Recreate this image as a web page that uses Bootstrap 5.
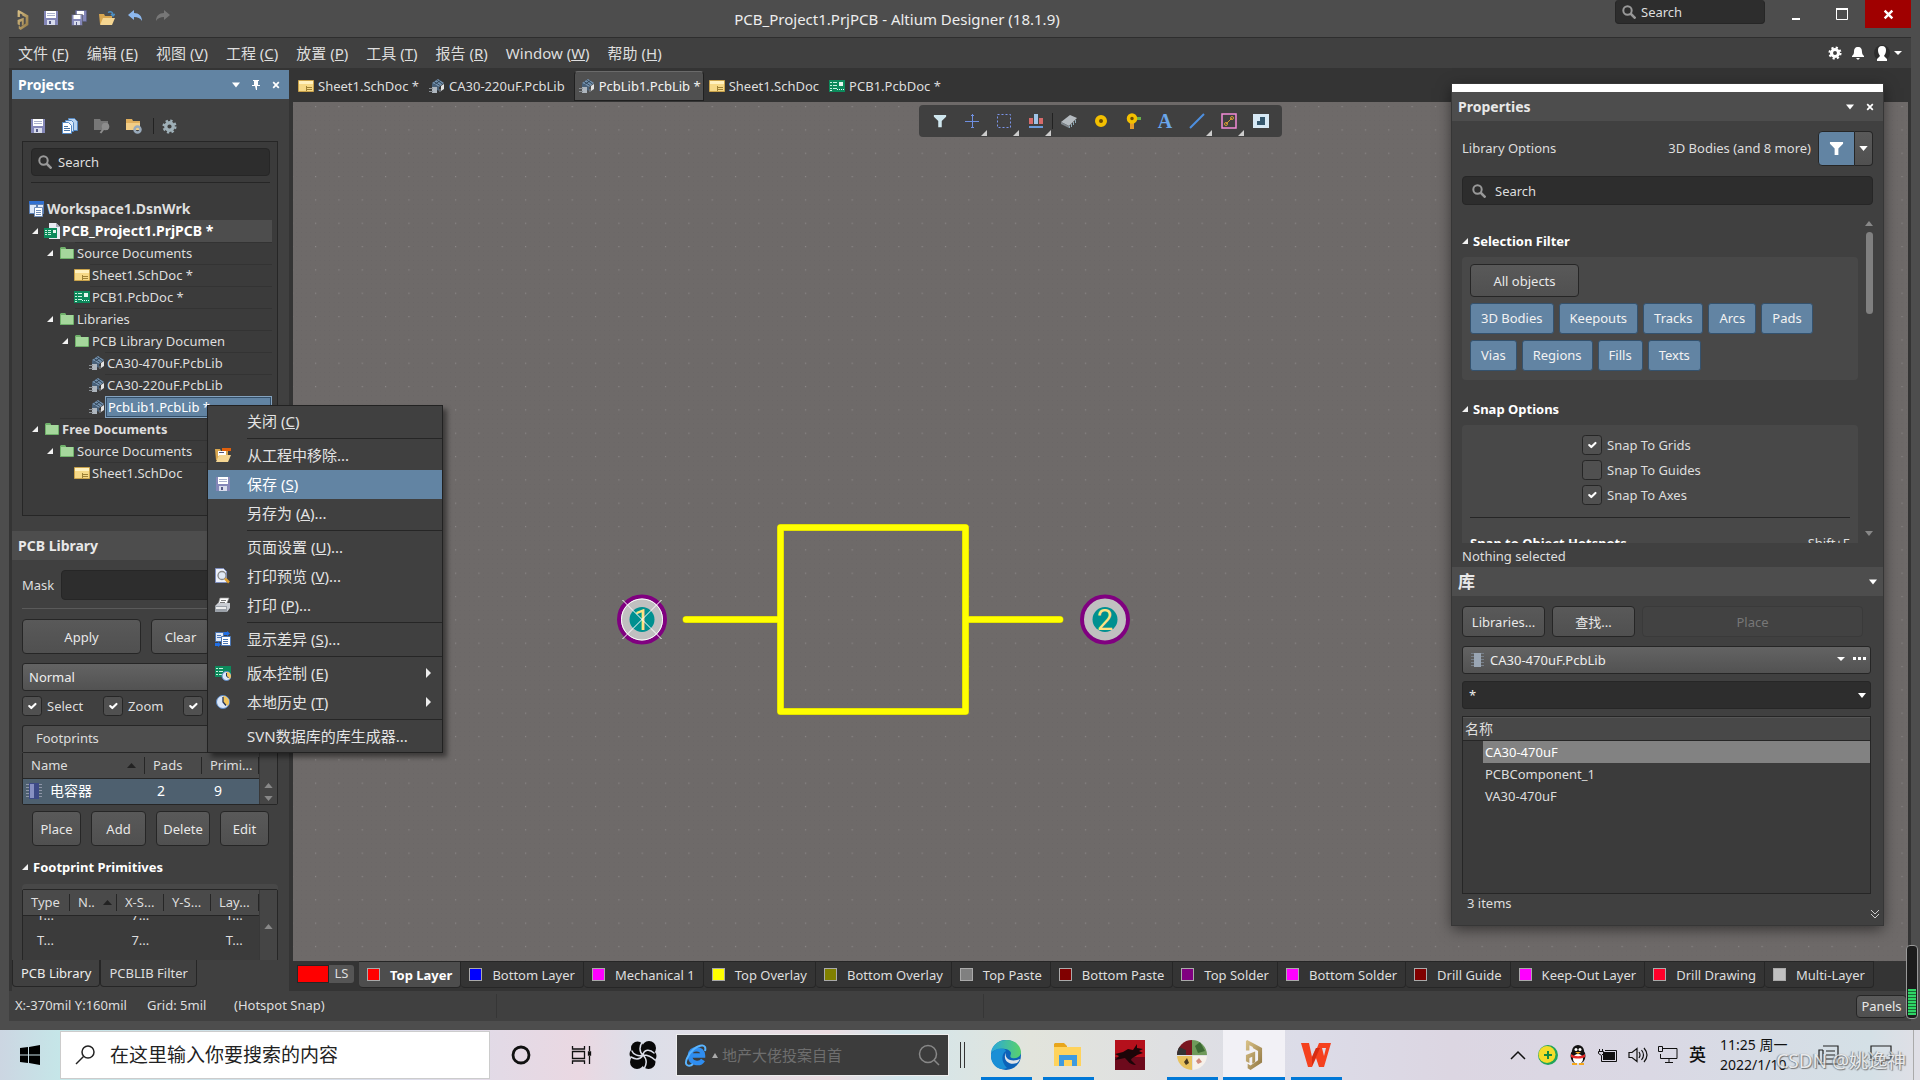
<!DOCTYPE html>
<html lang="zh-CN">
<head>
<meta charset="utf-8">
<meta name="viewport" content="width=device-width, initial-scale=1">
<title>PCB_Project1.PrjPCB - Altium Designer (18.1.9)</title>
<link href="https://cdn.jsdelivr.net/npm/bootstrap@5.3.0/dist/css/bootstrap.min.css" rel="stylesheet">
<style>
:root{--frame:#4d4d4d;--face:#404040;--deep:#343434;--edge:#262626;--blue:#6284a3;--ink:#dedede}
body{font-family:"Noto Sans","Noto Sans CJK SC",sans-serif;font-size:13px;line-height:20px;color:var(--ink);background:var(--frame);overflow:hidden}
button,input,select{font-family:inherit}
svg{flex:none;display:block}
a{color:inherit;text-decoration:none}
.shrinkable{min-width:0;min-height:0}
.i16{width:16px;height:16px}
.title-bar{height:37px}
.title-text{font-size:15px;color:#eee;line-height:38px;padding-left:8px}
.quick{gap:12px;padding:10px 0 0 15px}
.bare{background:none;border:0;padding:0;color:inherit}
.field{background:#2d2d2d;border:1px solid var(--edge);border-radius:4px;color:var(--ink);font-size:13px;line-height:20px;padding:0 8px}
.field:focus{background:#2d2d2d;color:#fff;box-shadow:none}
.field::placeholder{color:var(--ink);opacity:1}
.seek{position:relative}
.seek svg{position:absolute;left:7px;top:50%;margin-top:-7px;width:14px;height:14px}
.seek .field{width:100%;padding-left:26px}
.top-seek{width:150px;height:24px;margin-right:8px}
.top-seek .field{height:24px;border-top:0;padding-left:25px}
.win-btn{width:46px;height:28px}
.win-close{background:#a00000;margin-right:9px}
.workspace{margin:0 9px;background:var(--deep)}
.menu-bar{height:31px;border-top:1px solid #2e2e2e;background:var(--face);font-size:15px;gap:18px;padding:0 9px}
.menu-bar a{line-height:30px;white-space:pre}
.menu-icons{gap:9px}
.left-dock{width:277px;margin:2px 4px 0 3px;background:var(--face)}
.dock-head{height:29px;background:var(--frame);font-size:14px;font-weight:700;padding:0 9px 0 6px;color:#e8e8e8;flex:none;gap:12px}
.dock-head.on{background:var(--blue);color:#fff}
.proj-tools{height:42px;padding:12px 18px 0;gap:16px}
.tool-sep{border-left:1px solid #222;height:16px}
.tree-box{margin:0 11px 15px 10px;border:1px solid var(--edge);padding:6px 5px 31px 6px;background:#3b3b3b}
.tree-box .seek{margin:0 2px}
.tree-box .field{height:28px}
.tree-rule{border-top:1px solid var(--edge);margin:6px 2px 15px}
.tree{list-style:none;margin:0;padding:0}
.tree li{height:22px;display:flex;align-items:center}
.tree .tw{width:12px;flex:none}
.tree .lab{flex:1;min-width:0;height:22px;line-height:21px;border-top:1px solid #333;padding:0 46px 0 2px;white-space:nowrap}
.tree .lab span{display:block;overflow:hidden}
.tree .top{font-size:14px}
.tree .top span{overflow:visible}
.l1{padding-left:3px}.l2{padding-left:18px}.l3{padding-left:45px}.l3f{padding-left:33px}.l4{padding-left:60px}
.tree .hot{background:#4d4d4d;color:#fff}
.tree .sel{background:var(--blue);border:1px solid #85a3bf;outline:1px solid #34506a;outline-offset:-2px;color:#fff;line-height:20px}
.lib-pane{padding:10px 11px 0 10px;overflow:hidden}
.lib-pane>*{flex-shrink:0}
.lib-pane .mask{height:30px}
.rule{border-top:1px solid #5a5a5a;margin:8px 0 10px}
.key{background:linear-gradient(#595959,#505050);border:1px solid var(--edge);border-radius:4px;color:#e8e8e8;font-size:13px;line-height:20px;padding:0 6px}
.h35{height:35px}
.drop,.drop:focus{background:linear-gradient(#636363,#525252);border:1px solid var(--edge);border-radius:3px;color:#eee;font-size:13px;line-height:20px;height:28px;padding:0 6px;box-shadow:none}
.drop.dark{background:#2d2d2d}
.tick{width:20px;height:20px;margin:0;border:1px solid var(--edge);border-radius:4px;background-color:#505050;background-size:14px;float:none;flex:none}
.tick:checked{background-color:#505050;border-color:var(--edge)}
.tick:focus{box-shadow:none;border-color:var(--edge)}
.tick-lab{display:flex;align-items:center;gap:5px}
.foot-tab{height:27px;background:var(--frame);border:1px solid var(--edge);border-bottom:0;padding:2px 13px;margin-top:9px;border-radius:3px 3px 0 0}
.grid-box{border:1px solid var(--edge);background:#3b3b3b;display:flex;border-radius:2px}
.grid-box table{width:236px;table-layout:fixed;flex:none}
.grid-box th{height:25px;background:#4a4a4a;border-bottom:1px solid var(--edge);font-weight:400;padding:0 8px;white-space:nowrap;overflow:hidden}
.grid-box th>div{display:flex;justify-content:space-between;align-items:center;height:17px;margin-right:-8px;border-right:1px solid var(--edge)}
.grid-box td{padding:0 12px;height:26px;white-space:nowrap}
.sb{flex:1;background:#454545;border-left:1px solid #383838;display:flex;flex-direction:column;align-items:center;padding-top:26px}
.picked td{background:#4e606f;color:#fff;font-size:14px}
.ops{padding:6px 9px 0 10px;gap:10px}
.sec{font-weight:700;color:#fff;display:flex;align-items:center;gap:5px}
.prim-wrap{background:#484848;padding-top:5px;border-radius:4px 4px 0 0;overflow:hidden;flex:1 1 0;min-height:0}
.prim-wrap .rows{height:60px;overflow:hidden}
.prim-wrap .rows table{margin-top:-13px}
.prim-wrap td{height:25px;padding:0 14px}
.dock-tabs{height:31px;flex:none}
.dock-tabs a{height:27px;border:1px solid var(--edge);border-top:0;border-radius:0 0 4px 4px;padding:3px 8px 0;color:var(--ink)}
.dock-tabs a.on{background:var(--face);color:#eee}
.doc-tabs{height:34px;padding:3px 0 1px}
.doc-tabs a{height:30px;padding:0 4px;display:flex;align-items:center;gap:4px;white-space:nowrap;border:1px solid transparent}
.doc-tabs a.on{background:#505050;border-color:#6a6a6a #202020 #202020;border-radius:4px 4px 0 0;color:#f4f4f4;padding:0 2px 0 4px;margin-left:4px}
.board{background:#6e6a69;margin-right:3px;position:relative;overflow:hidden}
.board>svg{position:absolute;inset:0;width:100%;height:100%}
.bar-float{position:absolute;top:3px;left:626px;height:32px;width:363px;background:var(--face);border-radius:4px;padding:0 5px;display:flex;align-items:center}
.bar-float button{width:32px;height:32px;display:flex;align-items:center;justify-content:center;position:relative}
.bar-float .more::after{content:"";position:absolute;right:1px;bottom:1px;border-left:6px solid transparent;border-bottom:6px solid #ccc}
.glyph-a{font:700 20px "Liberation Serif",serif;color:#6aa6ea}
.layers{height:30px;padding-left:4px}
.layers a{height:27px;border:1px solid var(--edge);border-left-width:0;border-radius:0 0 4px 4px;padding:0 8px;display:flex;align-items:center;gap:10px;white-space:nowrap}
.layers a.on{background:var(--frame);font-weight:700;color:#fff}
.sw{width:13px;height:13px;border:1px solid #aaa;flex:none}
.ls{margin:4px 5px 0 0;height:18px;width:57px;line-height:17px}
.ls i{width:32px;background:red;border:1px solid var(--edge)}
.ls b{flex:1;font-weight:400;background:#555;border-radius:0 3px 3px 0;text-align:center}
.status{height:30px;background:var(--face);margin:0 9px;padding-left:6px}
.status .cell{border-right:1px solid #363636;height:24px;line-height:22px}
.panels-btn{height:23px;width:51px;margin-right:4px;padding:0}
.bottom-edge{height:9px}
.task{height:50px;color:#111;background:linear-gradient(90deg,#ccd6e2 0,#c5e6e8 60px,#dcdcea 420px,#ead8e2 580px,#dcdfe9 640px,#ecdde2 830px,#d2e6ec 900px,#e2e4dc 1030px,#dcdce8 1300px,#dcd6e2 1450px,#dad8e4 1650px,#d4e0e6 1870px,#e0dfe6 100%)}
.start{width:60px}
.win-seek{width:430px;height:48px;margin-top:1px;position:relative}
.win-seek input{width:100%;height:48px;border:1px solid #ccc;background:#fff;border-radius:0;font-size:19px;padding:0 0 0 49px;color:#222}
.win-seek input::placeholder{color:#222;opacity:1}
.win-seek svg{position:absolute;left:14px;top:13px}
.c61{width:61px}.c62{width:62px}.c30{width:30px}
.cellb{display:flex;align-items:center;justify-content:center;height:50px;position:relative}
.run::after{content:"";position:absolute;left:6px;right:5px;bottom:0;height:3px;background:#0078d7}
.live{background:#f2f1f6}
.live::after{left:0;right:0}
.ie{width:273px;height:42px;background:#3c3c3c;border:1px solid #eee;margin:4px 0 0 3px;position:relative;display:flex;align-items:center;padding:0 8px 0 7px;gap:4px}
.ie input{background:none;border:0;font-size:15px;color:#6e6e6e;width:170px;padding:0}
.ie input::placeholder{color:#6e6e6e;opacity:1}
.lang{width:29px;font-size:17px;font-weight:500}
.clock{width:83px;font-size:14px;line-height:20px;padding:5px 0 0 8px;white-space:nowrap}
.desk-end{width:16px;border-right:1px solid #aaa;margin-right:6px}
.wmark{position:absolute;right:14px;bottom:4px;font-size:19px;line-height:30px;color:#eee;opacity:.75;text-shadow:1px 1px 1px #555,-1px 0 1px #777;white-space:nowrap}
.ctx{--bs-dropdown-padding-y:1px;--bs-dropdown-padding-x:0;--bs-dropdown-bg:#404040;--bs-dropdown-border-color:#222;--bs-dropdown-border-radius:0;--bs-dropdown-font-size:15px;width:236px;position:absolute;left:207px;top:405px;box-shadow:4px 4px 5px rgba(0,0,0,.45)}
.ctx .dropdown-item{height:29px;padding:0 10px 2px 7px;color:#e4e4e4;display:flex;align-items:center;line-height:26px;white-space:pre}
.ctx .dropdown-item .ic{width:32px;flex:none}
.ctx .dropdown-item.hot{background:var(--blue);color:#fff}
.ctx hr{margin:2px 0 2px 39px;border-top:1px solid var(--edge);opacity:1}
.props{position:absolute;right:37px;top:84px;width:431px;background:var(--face);border-top:8px solid #fff;box-shadow:0 4px 14px rgba(0,0,0,.55);display:flex;flex-direction:column;outline:1px solid #363636}
.props .inner{padding:0 10px}
.opt-row{padding-top:10px}
.opt-row>span{margin-top:-2px}
.split-l{width:37px;height:35px;background:var(--blue);color:#fff}
.split-r{width:18px;height:35px;padding:0;border-left:0}
.pseek{margin:10px 0}
.pseek svg{left:10px}
.pseek .field{height:29px;padding-left:32px}
.pview{height:328px;overflow:hidden;position:relative;padding-right:15px}
.pbox{background:#484848;border-radius:4px}
.objs{padding:7px 8px 11px;height:123px}
.chip{background:var(--blue);border:1px solid #34526e;border-radius:3px;color:#f2f2f2;font-size:13px;line-height:20px;height:31px;padding:0 10px 2px;white-space:nowrap}
.chips{gap:5px;margin-top:6px}
.snaps{gap:5px;padding-left:112px}
.snap-rule{border-top:1px solid var(--edge);margin:12px 0 15px}
.pscroll{position:absolute;right:0;top:6px;bottom:7px;width:8px}
.pthumb{width:7px;height:82px;background:#808080;border-radius:4px;margin-top:6px}
.lib-keys{gap:7px;height:31px;padding-right:10px}
.ghost,.ghost:disabled{background:#424242;border-color:#3a3a3a;color:#777}
.lib-pick{margin:9px 2px 7px 0}
.lib-pick .drop{padding-left:27px}
.lib-list{border:1px solid var(--edge);background:#3b3b3b;height:178px;margin-right:2px}
.lib-list .hd{height:24px;background:#484848;border-bottom:1px solid var(--edge);border-top:1px solid #555;font-size:14px;line-height:21px;padding-left:2px}
.lib-list li{height:22px;line-height:22px;margin-left:20px;padding-left:2px}
.lib-list li.on{background:#828282;color:#fff}
.lib-foot{height:31px;padding:0 0 7px 5px;margin-right:-6px}
.meter{position:absolute;right:2px;top:945px;width:12px;height:74px;border:1px solid #999;border-radius:4px;background:#1c1c1c;padding:43px 1px 3px}
.meter div{height:100%;background:repeating-linear-gradient(#2fd566 0 2px,#1a6a35 2px 3px)}
</style>
<script src="https://cdn.jsdelivr.net/npm/bootstrap@5.3.0/dist/js/bootstrap.bundle.min.js"></script>
</head>
<body class="vh-100 d-flex flex-column position-relative">
<svg width="0" height="0" class="position-absolute" aria-hidden="true">
<defs>
<linearGradient id="gold" x1="0" x2="1" y2="1"><stop stop-color="#dcc48a"/><stop offset="1" stop-color="#8e7440"/></linearGradient>
<symbol id="altium" viewBox="0 0 16 26"><path fill="url(#gold)" d="M2 0l5 2.500v3.500l-3-1.500V9H1V1zM7 2.500L15 7v12.500L5 26l-2.500-1.500v-4L5 22l6.500-4.500V9.500L7 7zM1 13l8-3v9l-2.500 1.500v-6L4 15.500V20l-3-1.500z"/></symbol>
<symbol id="save" viewBox="0 0 16 16"><path fill="#8487b8" d="M1 1h14v14H1z"/><path fill="#fff" d="M3 1h10v7H3z"/><path fill="#d8dcec" d="M4 10h8v5H4z"/><path fill="#555a88" d="M6 11h2v3H6z"/><path stroke="#a9b0cc" d="M4 3.500h8M4 5.500h8"/></symbol>
<symbol id="saveall" viewBox="0 0 16 16"><path fill="#8487b8" stroke="#555a80" stroke-width=".5" d="M4.500.5h11v11h-11z"/><path fill="#fff" d="M6 1h7v4H6z"/><path fill="#8487b8" stroke="#4d4d4d" stroke-width=".5" d="M.5 4.500h11v11H.5z"/><path fill="#fff" d="M2.500 5h7v4h-7z"/><path fill="#d8dcec" d="M3 11h6v4H3z"/><path fill="#555a88" d="M5 12h1v3H5z"/></symbol>
<symbol id="open" viewBox="0 0 16 16"><path fill="#d9a750" d="M0 4h5l1 2h7v8H1z"/><path fill="#f5d692" d="M4 8h12l-3 7H1z"/><path fill="none" stroke="#4b8fc4" stroke-width="1.500" d="M9 2.500c3-2 5 0 5 2.500M12 4l2 2 2-2"/></symbol>
<symbol id="folder" viewBox="0 0 16 16"><path fill="#6fb16a" d="M1 3l1-1h4l1 1v2H1z"/><path fill="#a5d79c" d="M1 4h13v9.500H1z"/><path fill="none" stroke="#6fb16a" d="M1.500 4v9.500h13V4"/></symbol>
<symbol id="sheet" viewBox="0 0 16 16"><path fill="#f6d987" stroke="#c9a24a" d="M.5 2.500h15v11H.5z"/><path fill="#fff1bf" d="M1 3h14v3H1z"/><path fill="#8a6c22" d="M9 9h5v1H9zM9 11h5v1H9zM8 8h1v5H8z" opacity=".8"/></symbol>
<symbol id="pcb" viewBox="0 0 16 16"><path fill="#0d8a5c" d="M0 2h16v12H0z"/><path stroke="#c9f4e0" d="M1 4.500h2M4 4.500h4M1 7.500h2M4 7.500h4M1 10.500h2M4 10.500h4M1 12.500h2"/><path fill="#e5f6ee" d="M10 4h4v4h-4z"/><path stroke="#dff" stroke-dasharray="1 1" d="M8 11.500h7"/></symbol>
<symbol id="prj" viewBox="0 0 16 16"><path fill="#e8eaf2" d="M5 0h7l4 4v12H5z"/><path fill="#aab" d="M12 0l4 4h-4z"/><path fill="#0d8a5c" d="M0 5h13v10H0z"/><path stroke="#c9f4e0" d="M1 7.500h2M4 7.500h3M1 9.500h2M4 9.500h3M1 11.500h2M4 11.500h3"/><path fill="#e5f6ee" d="M9 7h3v3H9z"/></symbol>
<symbol id="lib" viewBox="0 0 16 16"><path fill="#7593b0" d="M3 5l6-4 6 4-5 4z"/><path stroke="#26384a" d="M5 3.500l6 4M7.500 2l6 4M5.500 6.500l6-4" stroke-width=".8"/><path fill="#48617a" d="M3 5v4l7 4V9z"/><path fill="#e3e3e3" d="M12 8l3-2v5l-3 2z"/><path fill="#aeb6be" d="M3 9h5v6H3z"/><path stroke="#8a9096" d="M0 10.500h4M0 13.500h4M11 11v3"/></symbol>
<symbol id="wrk" viewBox="0 0 16 16"><path fill="#2f6fd0" d="M0 0h15v3H0z"/><path fill="#dce7f7" stroke="#5b7fb5" d="M.5 3.500h8v9h-8zM7.500 3.500h7v9h-7z"/><path fill="#fff" stroke="#6f8db8" d="M5.500 6.500h8v9h-8z"/><path stroke="#6f8db8" d="M7 9.500h5M7 11.500h5M7 13.500h5"/></symbol>
<symbol id="docs" viewBox="0 0 16 16"><path fill="#b9d3ef" stroke="#5388c4" d="M6.500.5h6l3 3v9h-9z"/><path fill="#dceafa" stroke="#5388c4" d="M3.500 2.500h6l2 2v9h-8z"/><path fill="#fff" stroke="#5388c4" d="M.5 4.500h6l3 3v8h-9z"/><path stroke="#4a76a8" d="M2 8.500h4M2 10.500h6M2 12.500h6"/></symbol>
<symbol id="fsearch" viewBox="0 0 16 16"><path fill="#777" d="M0 1h6l1 2h7v9H0z"/><circle cx="11.500" cy="8.500" r="3.800" fill="#8d8d8d"/><path stroke="#8d8d8d" stroke-width="2" d="M9.500 11l-3 4"/></symbol>
<symbol id="fgear" viewBox="0 0 16 16"><path fill="#e0ae5c" d="M0 1h6l1 2h7v9H0z"/><path fill="#f3cd86" d="M0 5h14v7H0z"/><circle cx="11.500" cy="11.500" r="3" fill="none" stroke="#9ab" stroke-width="2.500"/></symbol>
<symbol id="gear" viewBox="0 0 16 16"><circle cx="8" cy="8" r="4" fill="none" stroke="currentColor" stroke-width="3.500"/><circle cx="8" cy="8" r="6.300" fill="none" stroke="currentColor" stroke-width="2.400" stroke-dasharray="2.500 2.450"/></symbol>
<symbol id="mag" viewBox="0 0 14 14"><circle cx="5.500" cy="5.500" r="4.200" fill="none" stroke="#999" stroke-width="2"/><path stroke="#999" stroke-width="2.500" d="M8.500 8.500l5 5"/></symbol>
<symbol id="twist" viewBox="0 0 6 6"><path fill="#f2f2f2" d="M6 0v6H0z"/></symbol>
<symbol id="down" viewBox="0 0 10 6"><path fill="#fff" d="M0 0h10L5 6z"/></symbol>
<symbol id="up" viewBox="0 0 10 6"><path fill="#888" d="M0 6h10L5 0z"/></symbol>
<symbol id="dn" viewBox="0 0 10 6"><path fill="#888" d="M0 0h10L5 6z"/></symbol>
<symbol id="cross" viewBox="0 0 10 10"><path stroke="#fff" stroke-width="2.200" d="M1.500 1.500l7 7M8.500 1.500l-7 7"/></symbol>
<symbol id="chipi" viewBox="0 0 16 16"><path stroke="#8f96a8" stroke-dasharray="1 2" stroke-width="3" d="M1.500 1v14M14.500 1v14"/><path fill="#3d4a86" d="M3 0h10v16H3z"/><path fill="#8790c2" d="M4 1h4v14H4z"/></symbol>
<symbol id="funnel" viewBox="0 0 16 16"><path fill="currentColor" d="M1 1h14v2L10 8v7H6V8L1 3z"/></symbol>
</defs>
</svg>

<header class="title-bar d-flex">
  <div class="quick d-flex align-items-start">
    <svg width="16" height="20"><use href="#altium"/></svg>
    <button class="bare" aria-label="保存"><svg class="i16"><use href="#save"/></svg></button>
    <button class="bare" aria-label="全部保存"><svg class="i16"><use href="#saveall"/></svg></button>
    <button class="bare" aria-label="打开"><svg class="i16"><use href="#open"/></svg></button>
    <button class="bare" aria-label="撤销"><svg class="i16" viewBox="0 0 16 16"><path fill="#8db8ee" d="M1 5l6-5v3c5 0 8 3 8 8-2-3-4-4-8-4v3z"/></svg></button>
    <button class="bare" aria-label="重做"><svg class="i16" viewBox="0 0 16 16"><path fill="#777" d="M15 5L9 0v3c-5 0-8 3-8 8 2-3 4-4 8-4v3z"/></svg></button>
  </div>
  <div class="title-text flex-grow-1 text-center">PCB_Project1.PrjPCB - Altium Designer (18.1.9)</div>
  <div class="top-seek seek"><svg><use href="#mag"/></svg><input class="field" aria-label="Search" placeholder="Search"></div>
  <button class="bare win-btn d-flex justify-content-center align-items-center" aria-label="Minimize"><svg width="10" height="14"><path fill="#fff" d="M1 11h8v2H1z"/></svg></button>
  <button class="bare win-btn d-flex justify-content-center align-items-center" aria-label="Maximize"><svg width="12" height="12"><path fill="none" stroke="#fff" d="M.5 1.500h11v10H.5z"/><path fill="#fff" d="M0 0h12v2H0z"/></svg></button>
  <button class="bare win-btn win-close d-flex justify-content-center align-items-center" aria-label="Close"><svg width="11" height="11"><use href="#cross"/></svg></button>
</header>

<main class="workspace flex-grow-1 d-flex flex-column shrinkable">
  <nav class="menu-bar d-flex align-items-center">
    <a href="#">文件 (<u>F</u>)</a><a href="#">编辑 (<u>E</u>)</a><a href="#">视图 (<u>V</u>)</a><a href="#">工程 (<u>C</u>)</a><a href="#">放置 (<u>P</u>)</a><a href="#">工具 (<u>T</u>)</a><a href="#">报告 (<u>R</u>)</a><a href="#">Window (<u>W</u>)</a><a href="#">帮助 (<u>H</u>)</a>
    <span class="menu-icons ms-auto d-flex align-items-center text-white">
      <svg width="14" height="14"><use href="#gear"/></svg>
      <svg width="14" height="14" viewBox="0 0 14 14"><path fill="#fff" d="M7 1c3 0 4 2 4 5 0 2 1 3 2 4v1H1v-1c1-1 2-2 2-4 0-3 1-5 4-5zM5 12h4l-2 2z"/></svg>
      <svg width="28" height="16" viewBox="0 0 28 16"><circle cx="8" cy="8" r="8" fill="#2d2d2d"/><path fill="#fff" d="M8 1c3 0 4 2 4 4 0 3-1 4-2 6l3 3v2H3v-2l3-3C5 9 4 8 4 5c0-2 1-4 4-4zM20 6h8l-4 4z"/></svg>
    </span>
  </nav>
  <div class="flex-grow-1 d-flex shrinkable">
    <aside class="left-dock d-flex flex-column">
      <div class="dock-head on d-flex align-items-center"><span class="flex-grow-1">Projects</span>
        <svg width="8" height="6"><use href="#down"/></svg>
        <svg width="8" height="10" viewBox="0 0 8 10"><path fill="#fff" d="M1 0h6v1H6v4h2v1H0V5h2V1H1zM3 6h2v4H4z"/></svg>
        <svg width="8" height="8"><use href="#cross"/></svg></div>
      <div class="proj-tools d-flex align-items-center">
        <button class="bare" aria-label="保存"><svg class="i16"><use href="#save"/></svg></button>
        <button class="bare" aria-label="文档"><svg class="i16"><use href="#docs"/></svg></button>
        <button class="bare" aria-label="浏览"><svg class="i16"><use href="#fsearch"/></svg></button>
        <button class="bare" aria-label="工程选项"><svg class="i16"><use href="#fgear"/></svg></button>
        <div class="d-flex align-items-center gap-2" style="margin-left:-5px"><div class="tool-sep"></div>
        <button class="bare" aria-label="设置" style="color:#9fb0b8"><svg width="15" height="15"><use href="#gear"/></svg></button></div>
      </div>
      <section class="tree-box">
        <div class="seek"><svg><use href="#mag"/></svg><input class="field" aria-label="Search" placeholder="Search"></div>
        <div class="tree-rule"></div>
        <ul class="tree">
          <li class="fw-bold"><svg class="i16"><use href="#wrk"/></svg><div class="lab top border-0"><span>Workspace1.DsnWrk</span></div></li>
          <li class="l1 fw-bold"><span class="tw"><svg width="6" height="6"><use href="#twist"/></svg></span><svg class="i16"><use href="#prj"/></svg><div class="lab top hot border-0"><span>PCB_Project1.PrjPCB *</span></div></li>
          <li class="l2"><span class="tw"><svg width="6" height="6"><use href="#twist"/></svg></span><svg class="i16"><use href="#folder"/></svg><div class="lab"><span>Source Documents</span></div></li>
          <li class="l3"><svg class="i16"><use href="#sheet"/></svg><div class="lab"><span>Sheet1.SchDoc *</span></div></li>
          <li class="l3"><svg class="i16"><use href="#pcb"/></svg><div class="lab"><span>PCB1.PcbDoc *</span></div></li>
          <li class="l2"><span class="tw"><svg width="6" height="6"><use href="#twist"/></svg></span><svg class="i16"><use href="#folder"/></svg><div class="lab"><span>Libraries</span></div></li>
          <li class="l3f"><span class="tw"><svg width="6" height="6"><use href="#twist"/></svg></span><svg class="i16"><use href="#folder"/></svg><div class="lab"><span>PCB Library Documen</span></div></li>
          <li class="l4"><svg class="i16"><use href="#lib"/></svg><div class="lab"><span>CA30-470uF.PcbLib</span></div></li>
          <li class="l4"><svg class="i16"><use href="#lib"/></svg><div class="lab"><span>CA30-220uF.PcbLib</span></div></li>
          <li class="l4"><svg class="i16"><use href="#lib"/></svg><div class="lab sel"><span>PcbLib1.PcbLib *</span></div></li>
          <li class="l1 fw-bold"><span class="tw"><svg width="6" height="6"><use href="#twist"/></svg></span><svg class="i16"><use href="#folder"/></svg><div class="lab"><span>Free Documents</span></div></li>
          <li class="l2"><span class="tw"><svg width="6" height="6"><use href="#twist"/></svg></span><svg class="i16"><use href="#folder"/></svg><div class="lab"><span>Source Documents</span></div></li>
          <li class="l3"><svg class="i16"><use href="#sheet"/></svg><div class="lab"><span>Sheet1.SchDoc</span></div></li>
        </ul>
      </section>
      <div class="dock-head d-flex align-items-center">PCB Library</div>
      <section class="lib-pane flex-grow-1 d-flex flex-column shrinkable">
        <div class="mask d-flex align-items-center"><label for="mask" style="width:39px">Mask</label><input id="mask" class="field flex-grow-1 h-100 shrinkable"></div>
        <div class="rule"></div>
        <div class="d-flex h35" style="gap:10px"><button class="key" style="width:119px">Apply</button><button class="key" style="width:59px">Clear</button><button class="key flex-fill" aria-label="Magnify"></button></div>
        <select class="form-select drop" style="margin-top:9px" aria-label="Mode"><option>Normal</option></select>
        <div class="d-flex" style="margin-top:5px;gap:20px">
          <label class="tick-lab"><input type="checkbox" class="form-check-input tick" checked>Select</label>
          <label class="tick-lab"><input type="checkbox" class="form-check-input tick" checked>Zoom</label>
          <input type="checkbox" class="form-check-input tick" aria-label="Clear existing" checked>
        </div>
        <div class="foot-tab">Footprints</div>
        <div class="grid-box">
          <table><colgroup><col style="width:122px"><col style="width:57px"><col style="width:57px"></colgroup>
            <thead><tr><th><div>Name<svg width="9" height="5" class="me-2"><path d="M0 5h9L4.500 0z" fill="#222"/></svg></div></th><th><div>Pads</div></th><th><div>Primi...</div></th></tr></thead>
            <tbody><tr class="picked"><td style="padding-left:3px"><div class="d-flex align-items-center" style="gap:8px"><svg class="i16"><use href="#chipi"/></svg>电容器</div></td><td>2</td><td>9</td></tr></tbody>
          </table>
          <div class="sb"><svg width="9" height="5" class="mt-1 mb-2"><use href="#up"/></svg><svg width="9" height="5"><use href="#dn"/></svg></div>
        </div>
        <div class="ops d-flex"><button class="key h35" style="width:49px">Place</button><button class="key h35" style="width:55px">Add</button><button class="key h35" style="width:54px">Delete</button><button class="key h35" style="width:49px">Edit</button></div>
        <div class="sec" style="margin:11px 0 7px"><svg width="6" height="6"><use href="#twist"/></svg>Footprint Primitives</div>
        <div class="prim-wrap">
          <div class="grid-box">
            <div>
              <table><colgroup><col style="width:47px"><col style="width:47px"><col style="width:47px"><col style="width:47px"><col style="width:48px"></colgroup>
                <thead><tr><th><div>Type</div></th><th><div>N..<svg width="9" height="5" class="me-1"><path d="M0 5h9L4.500 0z" fill="#222"/></svg></div></th><th><div>X-S...</div></th><th><div>Y-S...</div></th><th><div>Lay...</div></th></tr></thead>
              </table>
              <div class="rows"><table><tbody>
                <tr><td>T...</td><td></td><td>7...</td><td></td><td>T...</td></tr>
                <tr><td>T...</td><td></td><td>7...</td><td></td><td>T...</td></tr>
                <tr><td>P...</td><td>1</td><td>4...</td><td>4...</td><td>M...</td></tr></tbody></table></div>
            </div>
            <div class="sb"><svg width="9" height="5" class="mt-2"><use href="#up"/></svg></div>
          </div>
        </div>
      </section>
      <nav class="dock-tabs d-flex"><a class="on" href="#">PCB Library</a><a href="#">PCBLIB Filter</a></nav>
    </aside>

    <section class="flex-grow-1 d-flex flex-column shrinkable">
      <nav class="doc-tabs d-flex">
        <a href="#"><svg class="i16"><use href="#sheet"/></svg>Sheet1.SchDoc *</a>
        <a href="#"><svg class="i16"><use href="#lib"/></svg>CA30-220uF.PcbLib</a>
        <a href="#" class="on"><svg class="i16"><use href="#lib"/></svg>PcbLib1.PcbLib *</a>
        <a href="#"><svg class="i16"><use href="#sheet"/></svg>Sheet1.SchDoc</a>
        <a href="#"><svg class="i16"><use href="#pcb"/></svg>PCB1.PcbDoc *</a>
      </nav>
      <div class="board flex-grow-1">
        <svg>
          <defs>
            <pattern id="fine" width="4.666" height="4.666" patternUnits="userSpaceOnUse" x="22" y="4"><path fill="#6a6666" d="M0 0h1v1H0z"/></pattern>
            <pattern id="dots" width="23.330" height="23.330" patternUnits="userSpaceOnUse" x="22" y="4"><path fill="#8c8888" d="M0 0h1.200v1.200H0z"/></pattern>
          </defs>
          <rect width="100%" height="100%" fill="url(#fine)"/><rect width="100%" height="100%" fill="url(#dots)"/>
          <path fill="none" stroke="#c8c800" stroke-width="7" stroke-linecap="round" stroke-linejoin="round" d="M487.500 425.500H672.500V609.500H487.500zM393 517.500H487.500M672.500 517.500H767"/>
          <path fill="none" stroke="#ff0" stroke-width="6" stroke-linecap="round" stroke-linejoin="round" d="M487.500 425.500H672.500V609.500H487.500zM393 517.500H487.500M672.500 517.500H767"/>
          <g stroke="#800080" stroke-width="4" fill="#c0c0c0"><circle cx="349" cy="517.500" r="23"/><circle cx="812" cy="517.500" r="23"/></g>
          <g fill="#009090"><circle cx="349" cy="517.500" r="12.500"/><circle cx="812" cy="517.500" r="12.500"/></g>
          <g fill="#ffe282" font-family="Roboto, sans-serif" font-size="29" text-anchor="middle"><text x="349" y="528">1</text><text x="812" y="528">2</text></g>
          <g fill="none" stroke="#fff"><circle cx="349" cy="517.500" r="20.500"/><path d="M329.500 498l39 39M368.500 498l-39 39"/></g>
        </svg>
        <div class="bar-float">
          <button class="bare" aria-label="Filter" style="color:#cfe6ee"><svg width="14" height="14"><use href="#funnel"/></svg></button>
          <button class="bare more" aria-label="Origin"><svg class="i16" viewBox="0 0 16 16"><path stroke="#6f8fe0" fill="none" d="M8.500 1v14M1 8.500h14M7 2.500h3M7 14.500h3"/></svg></button>
          <button class="bare more" aria-label="Select area"><svg class="i16" viewBox="0 0 16 16"><path stroke="#7b95ea" fill="none" stroke-dasharray="2 2" d="M1.500 1.500h13v13h-13z"/></svg></button>
          <button class="bare more" aria-label="Align"><svg class="i16" viewBox="0 0 16 16"><path fill="#d66a6a" d="M1 5h4v6H1zM11 5h4v6h-4z"/><path fill="#9fc4e8" d="M6 1h4v10H6z"/><path fill="#6b9bdc" d="M1 13h14v2H1z"/></svg></button>
          <div class="tool-sep"></div>
          <button class="bare" aria-label="Body"><svg class="i16" viewBox="0 0 16 16"><path fill="#b5bbc0" d="M0 9l9-7 7 3-8 8z"/><path fill="#7f868c" d="M0 9l8 4v2l-8-4z"/><path stroke="#8fa8b4" d="M8.500 13v2M10.500 11v3M12.500 9v3M14.500 7v3"/></svg></button>
          <button class="bare" aria-label="Pad"><svg class="i16" viewBox="0 0 16 16"><circle cx="8" cy="8" r="4" fill="#6d4c00" stroke="#f4c000" stroke-width="4"/></svg></button>
          <button class="bare" aria-label="Via"><svg class="i16" viewBox="0 0 16 16"><path fill="#69b34a" d="M10 4h6v3h-6z"/><path fill="#e59a28" d="M5 9h4v7H5z"/><circle cx="7" cy="5.500" r="3.500" fill="#6d4c00" stroke="#f4c000" stroke-width="3.500"/></svg></button>
          <button class="bare glyph-a" aria-label="String">A</button>
          <button class="bare more" aria-label="Line"><svg class="i16" viewBox="0 0 16 16"><path stroke="#4d8fe0" stroke-width="2" d="M1 15L15 1"/></svg></button>
          <button class="bare more" aria-label="Track"><svg class="i16" viewBox="0 0 16 16"><path stroke="#f28bd6" fill="none" stroke-width="1.500" d="M1 1h14v14H1z"/><path stroke="#d49a34" d="M5 11l6-6"/><circle cx="5" cy="11" r="1.500" fill="none" stroke="#d49a34"/><circle cx="11" cy="5" r="1.500" fill="none" stroke="#d49a34"/></svg></button>
          <button class="bare" aria-label="Region"><svg class="i16" viewBox="0 0 16 16"><path fill="#d7e9f5" d="M0 1h16v14H0z"/><path fill="#35586e" d="M7 4h5v8H4V8h3z"/></svg></button>
        </div>
      </div>
      <nav class="layers d-flex">
        <div class="ls d-flex"><i></i><b>LS</b></div>
        <a class="on" href="#"><span class="sw" style="background:#f00"></span>Top Layer</a>
        <a href="#"><span class="sw" style="background:#00f"></span>Bottom Layer</a>
        <a href="#"><span class="sw" style="background:#f0f"></span>Mechanical 1</a>
        <a href="#"><span class="sw" style="background:#ff0"></span>Top Overlay</a>
        <a href="#"><span class="sw" style="background:#808000"></span>Bottom Overlay</a>
        <a href="#"><span class="sw" style="background:#808080"></span>Top Paste</a>
        <a href="#"><span class="sw" style="background:#800000"></span>Bottom Paste</a>
        <a href="#"><span class="sw" style="background:#800080"></span>Top Solder</a>
        <a href="#"><span class="sw" style="background:#f0f"></span>Bottom Solder</a>
        <a href="#"><span class="sw" style="background:#800000"></span>Drill Guide</a>
        <a href="#"><span class="sw" style="background:#f0f"></span>Keep-Out Layer</a>
        <a href="#"><span class="sw" style="background:#ff002a"></span>Drill Drawing</a>
        <a href="#"><span class="sw" style="background:#c0c0c0"></span>Multi-Layer</a>
      </nav>
    </section>
  </div>
</main>
<div class="status d-flex align-items-center">
  <div class="cell d-flex" style="width:482px"><span style="width:132px">X:-370mil Y:160mil</span><span style="width:87px">Grid: 5mil</span><span>(Hotspot Snap)</span></div>
  <div class="cell" style="width:487px"></div>
  <button class="key panels-btn ms-auto">Panels</button>
</div>
<div class="bottom-edge"></div>

<footer class="task d-flex position-relative">
  <button class="bare start cellb" aria-label="开始"><svg width="20" height="20" viewBox="0 0 20 20"><path d="M0 3l8-1v7.500H0zM9 2l11-2v9.500H9zM0 10.500h8V18l-8-1zM9 10.500h11V20L9 18z"/></svg></button>
  <div class="win-seek"><svg width="22" height="22" viewBox="0 0 22 22"><circle cx="14" cy="8" r="6" fill="none" stroke="#222" stroke-width="1.500"/><path stroke="#222" stroke-width="1.500" d="M9.500 12.500L2 20"/></svg><input aria-label="搜索" placeholder="在这里输入你要搜索的内容"></div>
  <button class="bare cellb c61" aria-label="Cortana"><svg width="20" height="20"><circle cx="10" cy="10" r="8" fill="none" stroke="#111" stroke-width="2.800"/></svg></button>
  <button class="bare cellb c61" aria-label="任务视图"><svg width="22" height="20" viewBox="0 0 22 20" fill="none" stroke="#111" stroke-width="1.300"><path d="M1.500 1v3h12V1M1.500 19v-3h12v3M1.500 6.500h12v7h-12zM18.500 1v5M18.500 11v8"/><path fill="#111" d="M17.500 7h2v3h-2z"/></svg></button>
  <button class="bare cellb c61" aria-label="浏览器"><svg width="28" height="28" viewBox="0 0 28 28"><g fill="#080808"><circle cx="8.500" cy="7" r="6.500"/><circle cx="20" cy="7" r="7"/><circle cx="6.500" cy="13" r="6"/><circle cx="21.500" cy="15" r="6"/><circle cx="8" cy="21" r="7"/><circle cx="19.500" cy="21" r="7"/><path d="M8 5h12v19H8z"/></g><g fill="none" stroke="#dcdfe9" stroke-width="1.500" stroke-linecap="round"><path d="M14 14C10 11 10 5 14 0M14 14c1-6 7-6 11-2M14 14c5 0 8 1 12 5M14 14c4 4 4 9 1 14M14 14c-3 5-7 5-12 2M14 14C9 16 4 13 3 10"/></g></svg></button>
  <div class="ie"><svg width="24" height="24" viewBox="0 0 24 24"><path fill="none" stroke="#2f8df0" stroke-width="4.500" d="M19 17c-3 5-13 4-13-4.500S19 4 19 12.500H7"/><path fill="none" stroke="#59b4ff" stroke-width="2" d="M21 8c2-7-5-7-11-2S0 20 3 22s6-1 6-1"/></svg><svg width="6" height="5"><path fill="#aaa" d="M0 5h6L3 0z"/></svg><input aria-label="IE 搜索" placeholder="地产大佬投案自首"><svg class="ms-auto" width="22" height="22"><circle cx="10" cy="10" r="8.500" fill="none" stroke="#888" stroke-width="1.500"/><path stroke="#888" stroke-width="1.500" d="M16 16l5 5"/></svg></div>
  <div class="cellb" style="width:26px"><svg width="5" height="26"><path stroke="#333" d="M.5 0v26M4.500 0v26"/></svg></div>
  <button class="bare cellb c62 run" aria-label="Edge"><svg width="30" height="30" viewBox="0 0 30 30"><defs><linearGradient id="eg" x2="1"><stop stop-color="#2aa7dc"/><stop offset="1" stop-color="#5ad26a"/></linearGradient></defs><circle cx="15" cy="15" r="15" fill="#0c62b8"/><path fill="url(#eg)" d="M0 13C2-4 29-4 30 12c0 5-5 7-9 6-3-1-1-3-1-5C19 8 6 7 0 13z"/><path fill="#1a8fd6" d="M0 14c4-6 13-7 15-3-4 2-6 10 1 17C7 32-1 24 0 14z"/><path fill="#dfe3e8" d="M15 12c-2 5 3 10 11 8l3-1c-1 2-2 3-3 4-8 3-15-3-11-11z"/></svg></button>
  <button class="bare cellb c62 run" aria-label="资源管理器"><svg width="28" height="26" viewBox="0 0 28 26"><path fill="#e8a61c" d="M0 2l1-1h9l3 3v5H0z"/><path fill="#ffd35c" d="M0 5h27v19H0z"/><path fill="#3e9be0" d="M5 13h18v11h-5v-6h-8v6H5z"/></svg></button>
  <button class="bare cellb c62" aria-label="龙"><svg width="30" height="30" viewBox="0 0 30 30"><path fill="#b5101c" d="M0 0h30v30H0z"/><path fill="#6d0a1c" d="M0 17h30v13H0z"/><path fill="#1c0508" d="M0 14l8-2 5-3 5 1 4-6v4l6 1-4 2 4 2-6 2c-2 2-5 2-6 5l5 5c-6 0-8-4-11-7l-5 1-5 1 4-4z"/></svg></button>
  <button class="bare cellb c62 run" aria-label="相册"><svg width="30" height="30" viewBox="0 0 30 30"><clipPath id="rc"><circle cx="15" cy="15" r="15"/></clipPath><g clip-path="url(#rc)"><path fill="#7a1620" d="M0 0h15v15H0z"/><path fill="#333" d="M0 6l9 4v5H0z"/><path fill="#6f9a5a" d="M15 0h15v15H15z"/><path fill="#3d6a34" d="M18 6l5-4 5 9-7 2z"/><path fill="#e8c25e" d="M0 16h15v14H0z"/><path fill="#4a3a20" d="M7 22l3-4 2 5-3 2z"/><path fill="#f6f1ea" d="M16 16h14v14H16z"/><path fill="#d08a7a" d="M19 21l3-3 3 4-4 2z"/></g></svg></button>
  <button class="bare cellb c62 run live" aria-label="Altium"><svg width="22" height="30"><use href="#altium"/></svg></button>
  <button class="bare cellb c62 run" aria-label="WPS"><svg width="30" height="26" viewBox="0 0 30 26"><path fill="#f5411e" d="M0 1h8l3 14 4-9h6l2 8 2-8h-9l2-5h12l-7 24h-5l-3-9-4 9H7z"/><path fill="#c3200c" d="M11 15l4-9h4l-8 18z" opacity=".6"/></svg></button>
  <div class="ms-auto d-flex">
    <div class="cellb c30"><svg width="16" height="10"><path fill="none" stroke="#111" stroke-width="1.500" d="M1 9l7-7 7 7"/></svg></div>
    <div class="cellb c30"><svg width="20" height="20"><circle cx="10" cy="10" r="10" fill="#22a45a"/><circle cx="9" cy="9.500" r="8.500" fill="#f3dd2a"/><path stroke="#128a44" stroke-width="2" d="M10 6v8M6 10h8"/></svg></div>
    <div class="cellb c30"><svg width="18" height="20" viewBox="0 0 18 20"><ellipse cx="9" cy="11" rx="7.500" ry="8" fill="#111"/><circle cx="9" cy="6" r="6" fill="#111"/><ellipse cx="9" cy="14" rx="5" ry="5" fill="#fff"/><path fill="#e52b2b" d="M2 9c4 3 10 3 14 0v3c-4 2-10 2-14 0z"/><circle cx="7" cy="4.500" r="1.500" fill="#fff"/><circle cx="11" cy="4.500" r="1.500" fill="#fff"/><path fill="#f6a81c" d="M6 7h6l-3 2zM3 18h5v2H3zM10 18h5v2h-5z"/></svg></div>
    <div class="cellb c30"><svg width="20" height="14"><path fill="#111" d="M5 4h12v8H5z"/><path fill="none" stroke="#111" d="M7 2.500h11.500v11h-15V8M.5 3.500h5v2l-2 2-3-2zM1.500 1v3M4.500 1v3"/></svg></div>
    <div class="cellb c30"><svg width="20" height="16" fill="none" stroke="#111" stroke-width="1.200"><path d="M1 5.500h3l5-4v13l-5-4H1zM11 5q2 3 0 6M13.500 3q4 5 0 10M16 1q6 7 0 14"/></svg></div>
    <div class="cellb c30"><svg width="20" height="18" fill="none" stroke="#111"><path d="M5 2.500h14v10H2.500V8M11 13v3M7 16.500h8M.5.5h4v5h-4z"/></svg></div>
    <div class="cellb lang">英</div>
    <div class="clock">11:25 周一<br>2022/1/10</div>
    <div class="cellb" style="width:68px"><svg width="22" height="20" fill="none" stroke="#222" stroke-width="1.200"><path d="M5 1h15v18H1V5h4M5 5v12M8 6h9M8 10h9M8 14h9"/></svg></div>
    <div class="cellb" style="width:35px"><svg width="22" height="20" fill="none" stroke="#222" stroke-width="1.200"><path d="M1 1h20v14h-7l-3 4-3-4H1z"/></svg></div>
    <div class="desk-end"></div>
  </div>
  <div class="wmark">CSDN @姚逸神</div>
</footer>

<aside class="props">
  <div class="dock-head d-flex align-items-center"><span class="flex-grow-1">Properties</span><svg width="8" height="6"><use href="#down"/></svg><svg width="8" height="8"><use href="#cross"/></svg></div>
  <div class="inner">
    <div class="opt-row d-flex align-items-center">
      <span class="flex-grow-1">Library Options</span><span style="margin-right:7px">3D Bodies (and 8 more)</span>
      <button class="key split-l d-flex align-items-center justify-content-center rounded-end-0" aria-label="Filter"><svg width="15" height="15"><use href="#funnel"/></svg></button>
      <button class="key split-r d-flex align-items-center justify-content-center rounded-start-0" aria-label="Filter list"><svg width="9" height="5"><use href="#down"/></svg></button>
    </div>
    <div class="seek pseek"><svg><use href="#mag"/></svg><input class="field" aria-label="Search" placeholder="Search"></div>
    <div class="pview">
      <div class="sec" style="padding:16px 0 6px"><svg width="6" height="6"><use href="#twist"/></svg>Selection Filter</div>
      <div class="pbox objs">
        <button class="key" style="width:109px;height:33px">All objects</button>
        <div class="d-flex chips"><button class="chip">3D Bodies</button><button class="chip">Keepouts</button><button class="chip">Tracks</button><button class="chip">Arcs</button><button class="chip">Pads</button></div>
        <div class="d-flex chips"><button class="chip">Vias</button><button class="chip">Regions</button><button class="chip">Fills</button><button class="chip">Texts</button></div>
      </div>
      <div class="sec" style="padding:19px 0 6px"><svg width="6" height="6"><use href="#twist"/></svg>Snap Options</div>
      <div class="pbox" style="padding:10px 8px">
        <div class="snaps d-flex flex-column">
          <label class="tick-lab"><input type="checkbox" class="form-check-input tick" checked>Snap To Grids</label>
          <label class="tick-lab"><input type="checkbox" class="form-check-input tick">Snap To Guides</label>
          <label class="tick-lab"><input type="checkbox" class="form-check-input tick" checked>Snap To Axes</label>
        </div>
        <div class="snap-rule"></div>
        <div class="d-flex justify-content-between"><b class="text-white">Snap to Object Hotspots</b><span>Shift+E</span></div>
      </div>
      <div class="pscroll d-flex flex-column align-items-center"><svg width="8" height="5"><use href="#up"/></svg><div class="pthumb"></div><svg width="8" height="5" class="mt-auto"><use href="#dn"/></svg></div>
    </div>
    <div style="padding:3px 0 1px">Nothing selected</div>
  </div>
  <div class="dock-head d-flex align-items-center" style="font-size:17px;padding-right:6px"><span class="flex-grow-1">库</span><svg width="8" height="6"><use href="#down"/></svg></div>
  <div class="inner d-flex flex-column" style="padding-top:10px">
    <div class="lib-keys d-flex"><button class="key" style="width:83px">Libraries...</button><button class="key" style="width:83px">查找...</button><button class="key ghost flex-grow-1" disabled>Place</button></div>
    <div class="lib-pick position-relative"><select class="form-select drop" aria-label="Library"><option>CA30-470uF.PcbLib</option></select>
      <svg class="position-absolute" style="left:9px;top:7px" width="13" height="14"><path stroke="#777f88" stroke-dasharray="1 2" stroke-width="13" d="M6.500 0v14"/><path fill="#9aa6b4" d="M3 0h7v14H3z"/></svg>
      <svg class="position-absolute" style="right:4px;top:10px" width="30" height="6"><path fill="#fff" d="M0 1h8L4 5zM16 1h3v3h-3zM21 1h3v3h-3zM26 1h3v3h-3z"/></svg></div>
    <div class="position-relative" style="margin:0 2px 7px 0"><select class="form-select drop dark" aria-label="Mask"><option>*</option></select><svg class="position-absolute" style="right:5px;top:12px" width="8" height="5"><use href="#down"/></svg></div>
    <div class="lib-list"><div class="hd">名称</div><ul class="list-unstyled m-0"><li class="on">CA30-470uF</li><li>PCBComponent_1</li><li>VA30-470uF</li></ul></div>
    <div class="lib-foot d-flex justify-content-between align-items-end"><span style="margin-bottom:5px">3 items</span><svg width="8" height="8"><path fill="none" stroke="#ccc" d="M0 0l4 4 4-4M0 4l4 4 4-4"/></svg></div>
  </div>
</aside>

<div class="dropdown-menu show ctx">
  <button class="dropdown-item"><span class="ic"></span>关闭 (<u>C</u>)</button><hr>
  <button class="dropdown-item"><span class="ic"><svg class="i16" viewBox="0 0 16 16"><path fill="#d9a750" d="M0 2h5l1 2h7v9H1z"/><path fill="#fff" d="M3 4h8v5H3z"/><path stroke="#557" d="M4 5.500h5"/><path fill="#f5d692" d="M4 8h12l-3 7H1z"/><path fill="#e0600c" d="M7 1h9v3H7z"/></svg></span>从工程中移除...</button>
  <button class="dropdown-item hot"><span class="ic"><svg class="i16"><use href="#save"/></svg></span>保存 (<u>S</u>)</button>
  <button class="dropdown-item"><span class="ic"></span>另存为 (<u>A</u>)...</button><hr>
  <button class="dropdown-item"><span class="ic"></span>页面设置 (<u>U</u>)...</button>
  <button class="dropdown-item"><span class="ic"><svg class="i16" viewBox="0 0 16 16"><path fill="#eef2fb" stroke="#7f8fc0" d="M.5.5h8l3 3v11H.5z"/><circle cx="7" cy="7.500" r="4" fill="#dfe8f4" stroke="#888" stroke-width="1.300"/><path stroke="#e0a030" stroke-width="2.500" d="M10 10.500l4 4"/></svg></span>打印预览 (<u>V</u>)...</button>
  <button class="dropdown-item"><span class="ic"><svg class="i16" viewBox="0 0 16 16"><path fill="#fff" stroke="#999" stroke-width=".7" d="M5 1h9l-3 7H3z"/><path fill="#c9ccd2" d="M0 9l3-3h12v5l-3 4H0z"/><path fill="#9aa0a8" d="M0 9h12v6H0z"/><path fill="#eee" d="M1 10h10v2H1z"/><path stroke="#777" d="M6 3.500h5M5 5.500h5"/></svg></span>打印 (<u>P</u>)...</button><hr>
  <button class="dropdown-item"><span class="ic"><svg class="i16" viewBox="0 0 16 16"><path fill="#dfe8f6" stroke="#4b76b4" d="M.5 1.500h8v9h-8z"/><path fill="#fff" stroke="#4b76b4" d="M6.500 5.500h9v9h-9z"/><path stroke="#4b76b4" d="M2 4.500h4M2 6.500h4M8 8.500h5M8 10.500h5M8 12.500h5"/><path fill="#1f6fe8" d="M9 1h3V0l3 2.500L12 5V4H9zM0 12h3v-1l3 2.500L3 16v-1H0z"/></svg></span>显示差异 (<u>S</u>)...</button><hr>
  <button class="dropdown-item"><span class="ic"><svg class="i16" viewBox="0 0 16 16"><path fill="#0d8a5c" d="M0 1h16v11H0z"/><path stroke="#c9f4e0" d="M1 3.500h2M4 3.500h4M1 6.500h2M4 6.500h4M1 9.500h2M4 9.500h3"/><circle cx="11.500" cy="11" r="4.500" fill="#dbe8fa" stroke="#5b88c4"/><path fill="#f2c55c" d="M11.500 11V7a4 4 0 0 1 3 7z"/><path stroke="#235" fill="none" d="M11.500 8v3l2 2"/></svg></span>版本控制 (<u>E</u>)<svg class="ms-auto" width="6" height="10"><path fill="#eee" d="M0 0l5 5-5 5z"/></svg></button>
  <button class="dropdown-item"><span class="ic"><svg class="i16" viewBox="0 0 16 16"><circle cx="8" cy="8" r="6.500" fill="#dbe8fa" stroke="#5b88c4"/><path fill="#f2c55c" d="M8 8V2a6 6 0 0 1 4.500 10z"/><path stroke="#235" stroke-width="1.300" fill="none" d="M8 3v5l3 3.500"/></svg></span>本地历史 (<u>T</u>)<svg class="ms-auto" width="6" height="10"><path fill="#eee" d="M0 0l5 5-5 5z"/></svg></button><hr>
  <button class="dropdown-item"><span class="ic"></span>SVN数据库的库生成器...</button>
</div>
<div class="meter" aria-hidden="true"><div></div></div>
</body>
</html>
